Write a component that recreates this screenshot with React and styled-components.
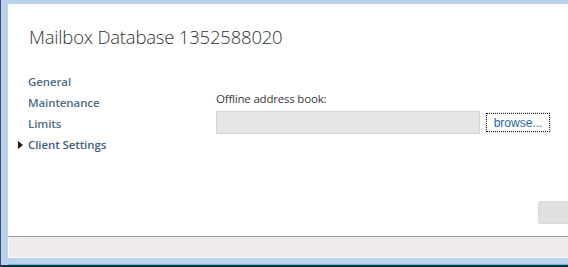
import styled, { createGlobalStyle } from "styled-components";

const GlobalStyle = createGlobalStyle`
  html, body {
    margin: 0;
    padding: 0;
    background: #ffffff;
  }
  body {
    font-family: "Open Sans", "Noto Sans", sans-serif;
  }
`;

const Window = styled.div`
  width: 568px;
  height: 267px;
  box-sizing: border-box;
  display: flex;
  flex-direction: column;
  background: #b9d1ea;
  border-left: 1px solid #3a4f66;
  border-bottom: 2px solid #1d2e3e;
  padding: 4px 0 0 7px;
  overflow: hidden;
`;

const Pane = styled.div`
  height: 232px;
  background: #ffffff;
  display: flex;
  flex-direction: column;
  border-bottom: 1px solid #a0a0a0;
`;

const Title = styled.h1`
  margin: 0;
  padding: 19px 0 0 21px;
  height: 45px;
  font-family: "Open Sans", sans-serif;
  font-weight: 300;
  font-size: 18.5px;
  letter-spacing: -0.2px;
  color: #333333;
  line-height: 28px;
`;

const Body = styled.div`
  display: flex;
  padding-top: 3px;
`;

const Nav = styled.ul`
  list-style: none;
  margin: 0;
  padding: 0 0 0 10px;
  width: 198px;
  display: flex;
  flex-direction: column;
`;

const NavItem = styled.li`
  height: 21px;
  line-height: 21px;
  display: flex;
  align-items: center;
  font-weight: 600;
  font-size: 11.5px;
  color: ${(p) => (p.$active ? "#3f5f7f" : "#4f6d8a")};
  letter-spacing: -0.1px;
`;

const Arrow = styled.span`
  width: 10px;
  display: inline-flex;
  align-items: center;
  svg {
    display: block;
  }
`;

const Form = styled.div`
  display: flex;
  flex-direction: column;
  padding-top: 20px;
`;

const Label = styled.div`
  font-size: 11.5px;
  color: #3a3a3a;
  line-height: 16px;
  letter-spacing: -0.2px;
  margin-bottom: 4px;
`;

const Row = styled.div`
  display: flex;
  align-items: center;
  gap: 6px;
`;

const TextBox = styled.div`
  width: 262px;
  height: 21px;
  background: #e6e6e6;
  border: 1px solid #d6d6d6;
`;

const BrowseButton = styled.button`
  height: 19px;
  width: 64px;
  box-sizing: border-box;
  border: 1px dotted #202020;
  outline: 1px solid #e8e8e8;
  background: #ffffff;
  color: #2a62b6;
  font-family: "Liberation Sans", Arial, sans-serif;
  font-size: 12px;
  padding: 0;
`;

const Footer = styled.div`
  flex: 1;
  display: flex;
  justify-content: flex-end;
  align-items: flex-end;
  padding-bottom: 12px;
`;

const GrayButton = styled.div`
  width: 32px;
  height: 21px;
  margin-right: -4px;
  background: #e0e0e0;
  border: 1px solid #dadada;
  border-radius: 2px;
`;

const StatusBar = styled.div`
  height: 20px;
  background: #efeceb;
  border-left: 1px solid #fafafa;
  border-bottom: 1px solid #fafafa;
`;

const BottomEdge = styled.div`
  flex: 1;
  border-bottom: 1px solid #5fc4de;
`;

export default function App() {
  const items = ["General", "Maintenance", "Limits"];
  return (
    <>
      <GlobalStyle />
      <Window>
        <Pane>
          <Title>Mailbox Database 1352588020</Title>
          <Body>
            <Nav>
              {items.map((item) => (
                <NavItem key={item}>
                  <Arrow />
                  {item}
                </NavItem>
              ))}
              <NavItem $active>
                <Arrow>
                  <svg width="5" height="8" viewBox="0 0 5 8">
                    <path d="M0 0 L5 4 L0 8 Z" fill="#1a1a1a" />
                  </svg>
                </Arrow>
                Client Settings
              </NavItem>
            </Nav>
            <Form>
              <Label>Offline address book:</Label>
              <Row>
                <TextBox />
                <BrowseButton>browse...</BrowseButton>
              </Row>
            </Form>
          </Body>
          <Footer>
            <GrayButton />
          </Footer>
        </Pane>
        <StatusBar />
        <BottomEdge />
      </Window>
    </>
  );
}
